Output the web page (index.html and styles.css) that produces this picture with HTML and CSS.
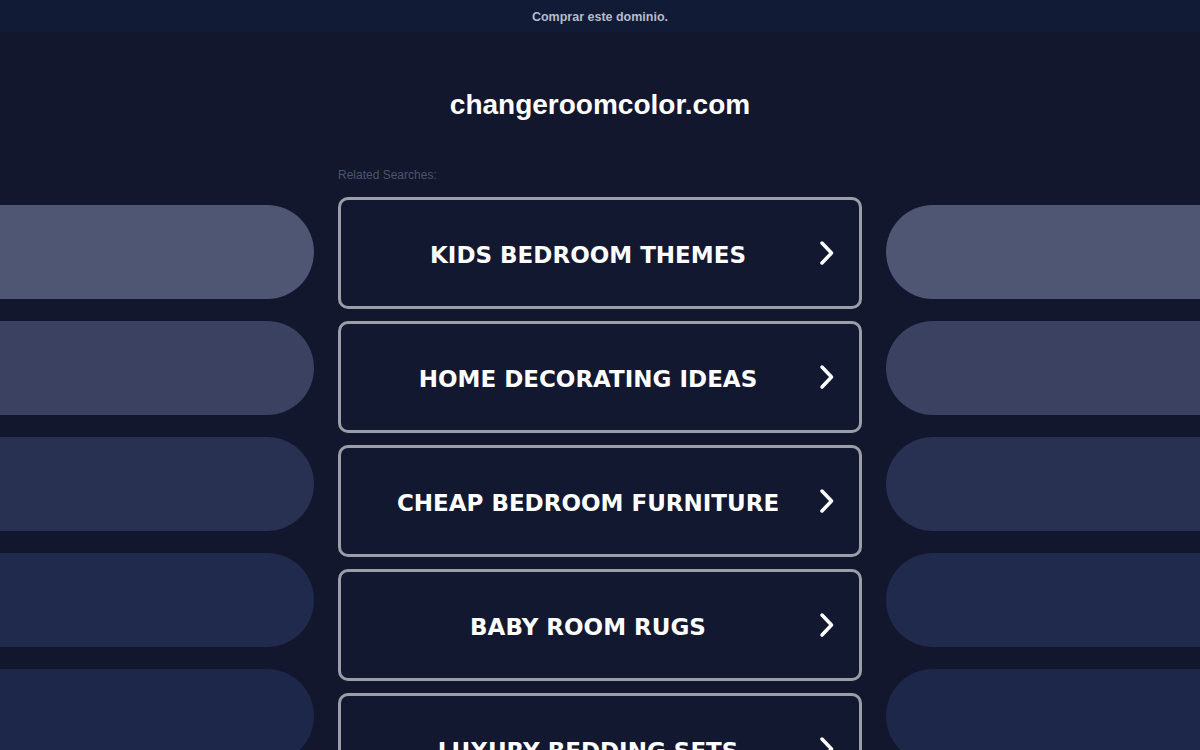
FILE: index.html
```html
<!DOCTYPE html>
<html lang="es">
<head>
  <meta charset="UTF-8">
  <title>changeroomcolor.com</title>
  <link rel="stylesheet" href="styles.css">
</head>
<body>

<div class="topbar">
  <a href="#">Comprar este dominio.</a>
</div>

<div class="main">
  <div class="pills pills-left">
    <div class="pill p1"></div>
    <div class="pill p2"></div>
    <div class="pill p3"></div>
    <div class="pill p4"></div>
    <div class="pill p5"></div>
  </div>

  <div class="content">
    <h1 class="domain">changeroomcolor.com</h1>
    <div class="related">Related Searches:</div>

    <div class="links">
      <a class="link" href="#"><span>KIDS BEDROOM THEMES</span>
        <svg class="chev" viewBox="0 0 16 26"><path d="M3 3 L12.5 13 L3 23"/></svg></a>
      <a class="link" href="#"><span>HOME DECORATING IDEAS</span>
        <svg class="chev" viewBox="0 0 16 26"><path d="M3 3 L12.5 13 L3 23"/></svg></a>
      <a class="link" href="#"><span>CHEAP BEDROOM FURNITURE</span>
        <svg class="chev" viewBox="0 0 16 26"><path d="M3 3 L12.5 13 L3 23"/></svg></a>
      <a class="link" href="#"><span>BABY ROOM RUGS</span>
        <svg class="chev" viewBox="0 0 16 26"><path d="M3 3 L12.5 13 L3 23"/></svg></a>
      <a class="link" href="#"><span>LUXURY BEDDING SETS</span>
        <svg class="chev" viewBox="0 0 16 26"><path d="M3 3 L12.5 13 L3 23"/></svg></a>
    </div>
  </div>

  <div class="pills pills-right">
    <div class="pill p1"></div>
    <div class="pill p2"></div>
    <div class="pill p3"></div>
    <div class="pill p4"></div>
    <div class="pill p5"></div>
  </div>
</div>

</body>
</html>
```

FILE: styles.css
```css
html, body {
  height: 100%;
}

body {
  margin: 0;
  padding: 0;
  background: #12172d;
  font-family: "Liberation Sans", Arial, sans-serif;
  overflow: hidden;
}

.topbar {
  height: 32px;
  background: #111b36;
  display: flex;
  justify-content: center;
  align-items: center;
}

.topbar a {
  color: #b4bccb;
  font-size: 12.5px;
  font-weight: bold;
  text-decoration: none;
  padding-top: 2px;
}

.main {
  display: grid;
  grid-template-columns: 314px 524px 314px;
  column-gap: 24px;
}

.pills {
  display: flex;
  flex-direction: column;
  gap: 22px;
  padding-top: 173px;
}

.pill {
  height: 94px;
}

.pills-left .pill {
  border-radius: 0 47px 47px 0;
}

.pills-right .pill {
  border-radius: 47px 0 0 47px;
}

.p1 { background: #4e5674; }
.p2 { background: #3b4261; }
.p3 { background: #283152; }
.p4 { background: #1f2a4c; }
.p5 { background: #1d2749; }

.content {
  padding-top: 58px;
}

.domain {
  margin: 0;
  text-align: center;
  color: #ffffff;
  font-size: 28px;
  line-height: 30px;
  font-weight: bold;
}

.related {
  margin-top: 48px;
  color: #4b5470;
  font-size: 12px;
  line-height: 14px;
}

.links {
  margin-top: 15px;
  display: flex;
  flex-direction: column;
  gap: 12px;
}

.link {
  height: 106px;
  border: 3px solid #9b9ea6;
  border-radius: 10px;
  display: flex;
  align-items: center;
  padding: 0 24px 0 16px;
  color: #ffffff;
  text-decoration: none;
  background: #121830;
}

.link span {
  flex: 1;
  text-align: center;
  padding-top: 3px;
  font-family: "DejaVu Sans", Verdana, sans-serif;
  font-weight: bold;
  font-size: 23px;
}

.chev {
  width: 16px;
  height: 26px;
  fill: none;
  stroke: #ffffff;
  stroke-width: 3.5;
  stroke-linecap: round;
  stroke-linejoin: round;
}
```
